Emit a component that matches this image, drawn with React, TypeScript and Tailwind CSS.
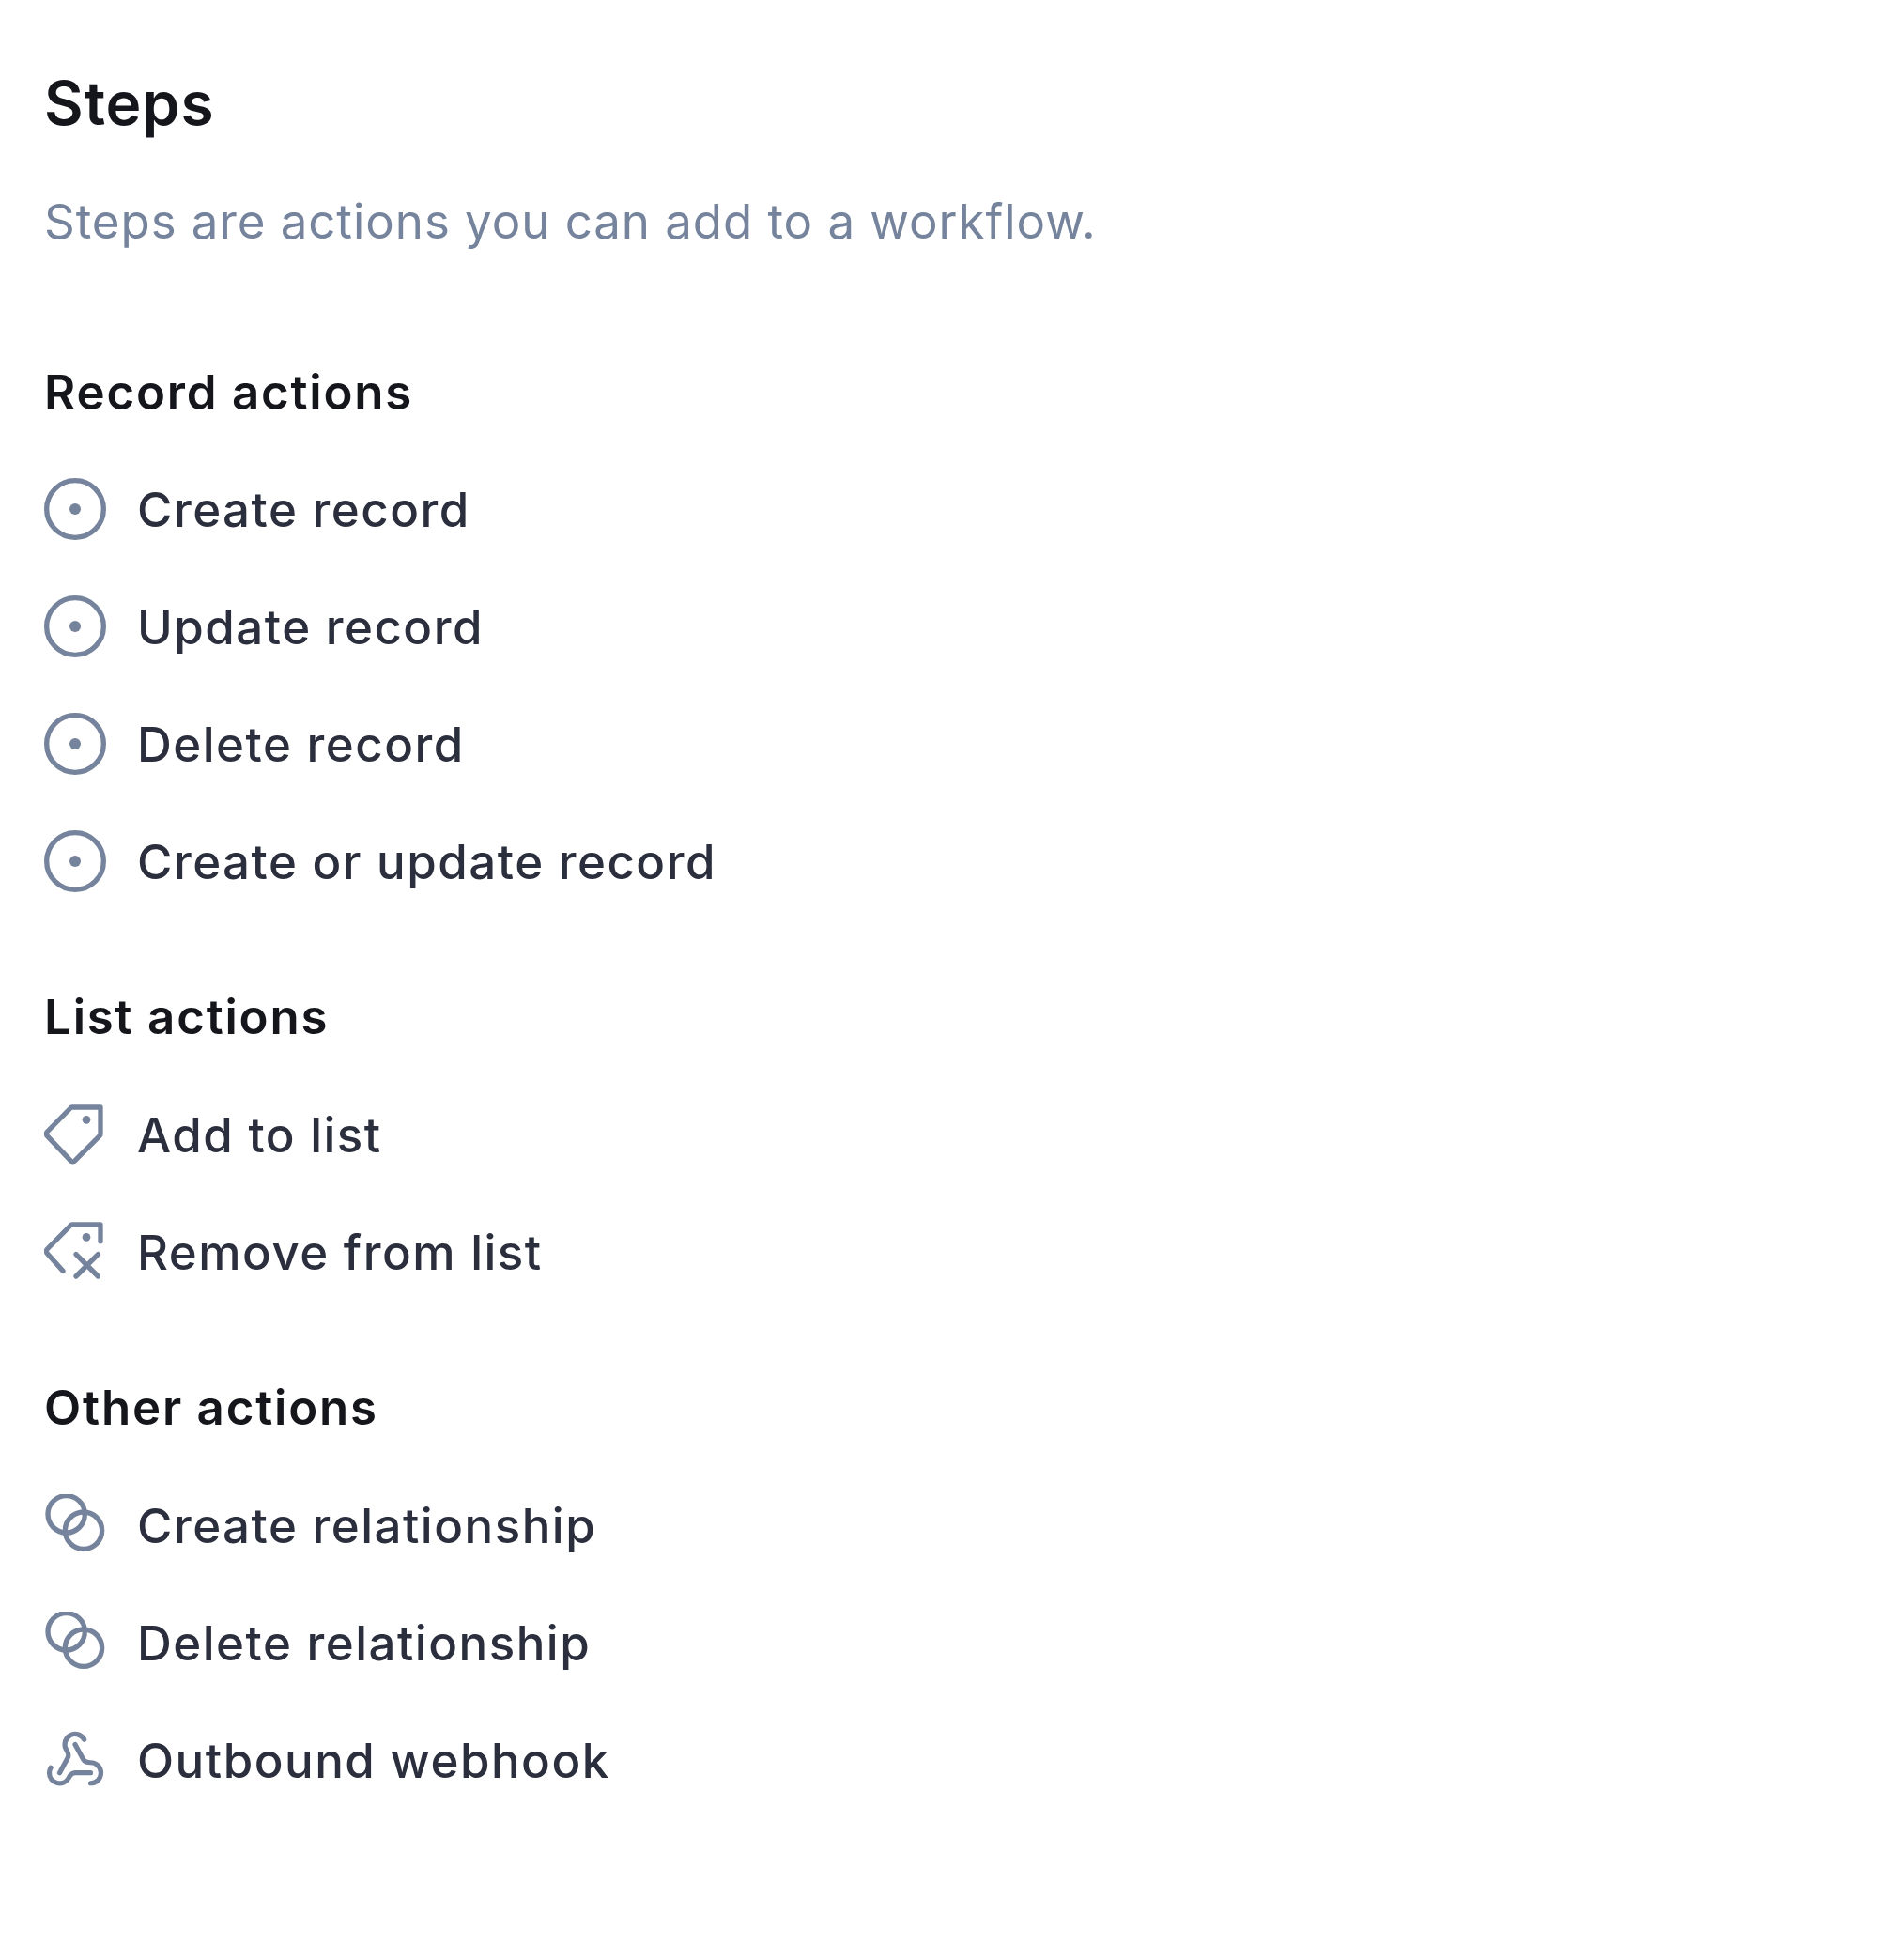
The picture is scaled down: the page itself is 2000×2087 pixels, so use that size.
import React from "react";
import { Webhook } from "lucide-react";

function Svg({ children }: { children: React.ReactNode }) {
  return (
    <svg viewBox="0 0 198 198" className="w-[66px] h-[66px] shrink-0 text-[#75849c]" fill="none" stroke="currentColor" strokeWidth={16} strokeLinecap="round" strokeLinejoin="round">
      {children}
    </svg>
  );
}

const Record = () => (
  <Svg>
    <circle cx="99" cy="99" r="91" />
    <circle cx="99" cy="99" r="18" fill="currentColor" stroke="none" />
  </Svg>
);
const TagI = () => (
  <Svg>
    <path d="M180 12H90a8 8 0 0 0-6 3L10 90a10 10 0 0 0 0 14l74 78a10 10 0 0 0 15 0l78-78a8 8 0 0 0 3-6Z" />
    <circle cx="135" cy="52" r="13" fill="currentColor" stroke="none" />
  </Svg>
);
const TagX = () => (
  <Svg>
    <path d="M60 160 10 104a10 10 0 0 1 0-14L84 15a8 8 0 0 1 6-3h90v53" />
    <circle cx="135" cy="52" r="13" fill="currentColor" stroke="none" />
    <path d="M102 107l70 70M172 107l-70 70" />
  </Svg>
);
const Rel = () => (
  <Svg>
    <circle cx="71" cy="64" r="59" />
    <circle cx="126" cy="116" r="59" />
  </Svg>
);
const Hook = () => <Webhook className="w-[66px] h-[66px] shrink-0 text-[#75849c]" strokeWidth={1.9} />;

const groups = [
  { title: "Record actions", mt: "mt-[118px]", ul: "mt-[59px]", items: [["Create record", Record], ["Update record", Record], ["Delete record", Record], ["Create or update record", Record]] },
  { title: "List actions", mt: "mt-[101px]", ul: "mt-[60px]", items: [["Add to list", TagI], ["Remove from list", TagX]] },
  { title: "Other actions", mt: "mt-[101px]", ul: "mt-[60px]", items: [["Create relationship", Rel], ["Delete relationship", Rel], ["Outbound webhook", Hook]] },
] as const;

export default function App() {
  return (
    <div className="min-h-[2087px] bg-white px-[47px] pt-[78px] font-['Inter',sans-serif]">
      <h1 className="text-[64px] leading-[64px] tracking-[1px] font-semibold text-[#14161c]">Steps</h1>
      <p className="mt-[62px] text-[51px] leading-[64px] tracking-[0.95px] text-[#75849c]">Steps are actions you can add to a workflow.</p>
      {groups.map((g) => (
        <section key={g.title} className={g.mt}>
          <h2 className="text-[51px] leading-[64px] tracking-[1.8px] font-semibold text-[#14161c]">{g.title}</h2>
          <ul className={`${g.ul} flex flex-col gap-[59px]`}>
            {g.items.map(([label, Icon]) => (
              <li key={label} className="flex items-center gap-[33px] h-[66px]">
                <Icon />
                <span className="pt-px text-[51px] leading-[64px] tracking-[1.5px] font-medium text-[#2b2f3d]">{label}</span>
              </li>
            ))}
          </ul>
        </section>
      ))}
    </div>
  );
}
